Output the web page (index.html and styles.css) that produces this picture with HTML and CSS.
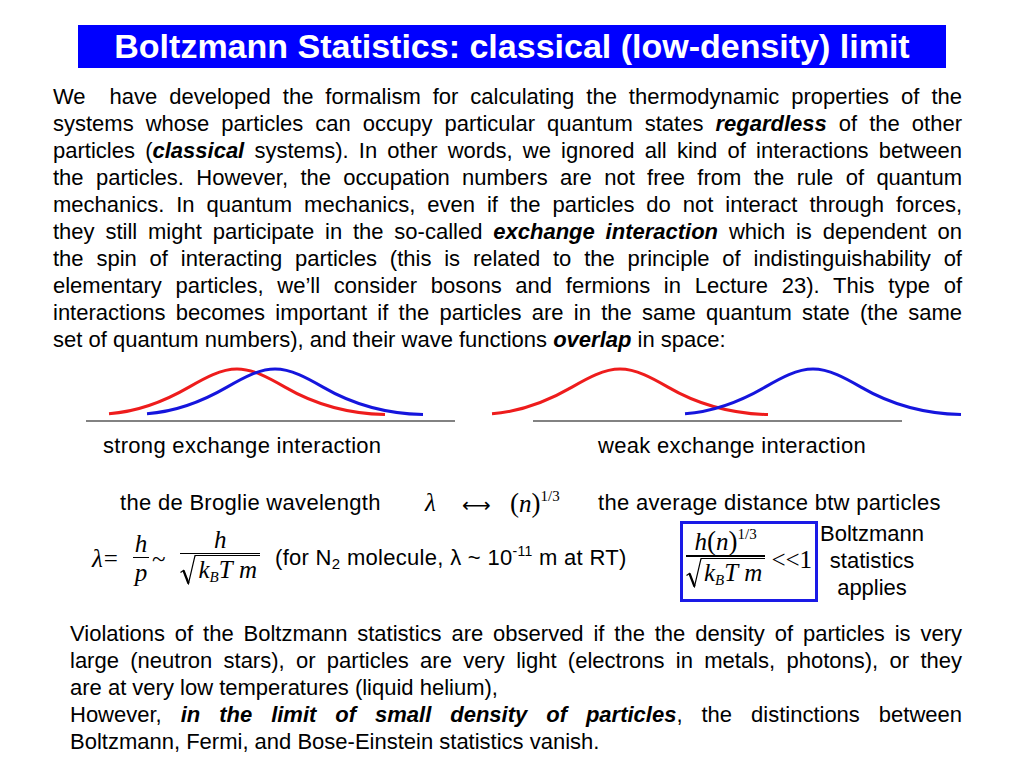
FILE: index.html
```html
<!DOCTYPE html>
<html lang="en">
<head>
<meta charset="utf-8">
<title>Boltzmann Statistics</title>
<link rel="stylesheet" href="styles.css">
</head>
<body>
<div class="slide">
  <h1 class="title">Boltzmann Statistics: classical (low-density) limit</h1>

  <p class="text intro">
    <span class="line">We&nbsp; have developed the formalism for calculating the thermodynamic properties of the</span>
    <span class="line">systems whose particles can occupy particular quantum states <b><i>regardless</i></b> of the other</span>
    <span class="line">particles (<b><i>classical</i></b> systems). In other words, we ignored all kind of interactions between</span>
    <span class="line">the particles. However, the occupation numbers are not free from the rule of quantum</span>
    <span class="line">mechanics. In quantum mechanics, even if the particles do not interact through forces,</span>
    <span class="line">they still might participate in the so-called <b><i>exchange interaction</i></b> which is dependent on</span>
    <span class="line">the spin of interacting particles (this is related to the principle of indistinguishability of</span>
    <span class="line">elementary particles, we’ll consider bosons and fermions in Lecture 23). This type of</span>
    <span class="line">interactions becomes important if the particles are in the same quantum state (the same</span>
    <span class="line last">set of quantum numbers), and their wave functions <b><i>overlap</i></b> in space:</span>
  </p>

  <svg class="curves" viewBox="0 360 1024 70" width="1024" height="70" aria-hidden="true">
    <defs>
      <path id="gauss" d="M-128 -1.3 C-101.3 -3.25 -74.7 -12.4 -48 -27.9 C-32 -37.2 -16 -46 0 -46 C16 -46 32 -37.2 48 -27.9 C81.3 -8.5 114.7 -1.27 148 -0.4"/>
    </defs>
    <path class="axis" d="M86 421 H455 M533 421 H902"/>
    <use href="#gauss" class="red" transform="translate(237 415)"/>
    <use href="#gauss" class="blue" transform="translate(275 415)"/>
    <use href="#gauss" class="red" transform="translate(620 415)"/>
    <use href="#gauss" class="blue" transform="translate(813 415)"/>
  </svg>

  <div class="captions">
    <span>strong exchange interaction</span>
    <span>weak exchange interaction</span>
  </div>

  <div class="broglie">
    <span>the de Broglie wavelength</span>
    <span class="m">λ</span>
    <span class="arrow">⟷</span>
    <span class="m"><span class="up paren">(</span>n<span class="up paren">)</span><sup class="exp">1/3</sup></span>
    <span>the average distance btw particles</span>
  </div>

  <div class="formulas">
    <div class="m eq">
      <span>λ</span><span class="up op">=</span><span class="frac small"><span class="num">h</span><span class="bar"></span><span class="den">p</span></span><span class="up op">~</span><span class="frac"><span class="num">h</span><span class="bar"></span><span class="den"><span class="sqrt"><svg class="rad" viewBox="0 0 16 30" width="16" height="30"><path class="rad-thin" d="M0.5 17.5 L3.5 15.5 L8.5 28.5 L15 0.7 H16"/><path class="rad-thick" d="M3.5 15.5 L8.5 28.5"/></svg><span class="radicand">k<sub class="sb">B</sub>T&nbsp;m</span></span></span></span>
    </div>
    <div class="note">(for N<sub class="nsub">2</sub> molecule, λ ~ 10<sup class="nsup">-11</sup> m at RT)</div>
    <div class="box m">
      <span class="frac"><span class="num">h<span class="up paren">(</span>n<span class="up paren">)</span><sup class="exp">1/3</sup></span><span class="bar"></span><span class="den"><span class="sqrt"><svg class="rad" viewBox="0 0 16 30" width="16" height="30"><path class="rad-thin" d="M0.5 17.5 L3.5 15.5 L8.5 28.5 L15 0.7 H16"/><path class="rad-thick" d="M3.5 15.5 L8.5 28.5"/></svg><span class="radicand">k<sub class="sb">B</sub>T&nbsp;m</span></span></span></span><span class="up ll">&lt;&lt;1</span>
    </div>
    <div class="applies">Boltzmann<br>statistics<br>applies</div>
  </div>

  <p class="text outro">
    <span class="line">Violations of the Boltzmann statistics are observed if the the density of particles is very</span>
    <span class="line">large (neutron stars), or particles are very light (electrons in metals, photons), or they</span>
    <span class="line last">are at very low temperatures (liquid helium),</span>
    <span class="line">However, <b><i>in the limit of small density of particles</i></b>, the distinctions between</span>
    <span class="line last">Boltzmann, Fermi, and Bose-Einstein statistics vanish.</span>
  </p>
</div>
</body>
</html>
```

FILE: styles.css
```css
html, body {
  margin: 0;
  padding: 0;
  background: #ffffff;
}

body {
  font-family: "Liberation Sans", Arial, sans-serif;
  color: #000000;
}

.slide {
  width: 1024px;
  height: 768px;
  overflow: hidden;
}

.title {
  margin: 25px 0 0 78px;
  width: 868px;
  height: 43px;
  background: #0000ff;
  color: #ffffff;
  font-size: 34px;
  font-weight: bold;
  line-height: 43px;
  text-align: center;
  white-space: nowrap;
}

.text {
  font-size: 22px;
  line-height: 27px;
  margin: 0;
}

.intro {
  margin: 15px 0 0 53px;
  width: 909px;
}

.outro {
  margin: 13.5px 0 0 70px;
  width: 892px;
  line-height: 27.2px;
}

.line {
  display: block;
  text-align: justify;
  text-align-last: justify;
  white-space: nowrap;
}

.line.last {
  text-align-last: left;
}

/* diagrams */
.curves {
  display: block;
  margin-top: 7px;
}

.axis {
  stroke: #5a5a5a;
  stroke-width: 1.5;
  fill: none;
}

.curves use {
  fill: none;
  stroke-width: 3;
}

.red {
  stroke: #ee1c1c;
}

.blue {
  stroke: #1515dd;
}

.captions {
  display: grid;
  grid-template-columns: 495px auto;
  padding-left: 103px;
  margin-top: 2px;
  font-size: 22px;
  line-height: 27px;
  letter-spacing: 0.3px;
}

/* math */
.m {
  font-family: "Liberation Serif", "Times New Roman", serif;
  font-style: italic;
  font-size: 25px;
}

.up {
  font-style: normal;
}

.paren {
  font-size: 27px;
}

.exp {
  font-size: 15px;
  font-style: normal;
  vertical-align: 11px;
  line-height: 0;
}

.broglie {
  display: grid;
  grid-template-columns: 305px 37px 48px 88px auto;
  align-items: center;
  padding-left: 120px;
  height: 30px;
  margin-top: 27px;
  font-size: 22px;
  letter-spacing: 0.3px;
}

.broglie .m {
  line-height: 30px;
  letter-spacing: 0;
}

.arrow {
  font-family: "DejaVu Sans", sans-serif;
  font-size: 20px;
  line-height: 30px;
  margin-top: 4px;
  letter-spacing: 0;
}

.formulas {
  display: grid;
  grid-template-columns: 183px 405px 138px 108px;
  align-items: center;
  padding-left: 92px;
  height: 90px;
}

.eq {
  display: flex;
  align-items: center;
  margin-top: -5px;
}

.op {
  margin: 0 15px 0 1px;
}

.frac {
  display: inline-flex;
  flex-direction: column;
  align-items: stretch;
  text-align: center;
  margin: 0 1px 0 0;
}

.frac.small {
  width: 16px;
  margin-right: 2px;
}

.num {
  display: block;
  line-height: 27px;
  padding: 0 2px;
}

.frac.small .num {
  padding: 0;
}

.bar {
  display: block;
  height: 1.5px;
  background: #000000;
}

.den {
  display: block;
  line-height: 28px;
  padding: 1px 0 0 0;
  text-align: center;
}

.sqrt {
  display: inline-flex;
  align-items: flex-start;
}

.rad {
  display: block;
  flex: none;
}

.rad-thin {
  fill: none;
  stroke: #000;
  stroke-width: 1.2;
}

.rad-thick {
  fill: none;
  stroke: #000;
  stroke-width: 2.2;
}

.radicand {
  border-top: 1.3px solid #000;
  line-height: 28px;
  padding: 0 3px 0 2px;
  white-space: nowrap;
}

.sb {
  font-size: 15px;
  vertical-align: -4px;
  line-height: 0;
}

.note {
  font-size: 22px;
  line-height: 27px;
  margin-top: -8px;
  white-space: nowrap;
  letter-spacing: 0.3px;
}

.nsub {
  font-size: 15px;
  vertical-align: -4px;
  line-height: 0;
}

.nsup {
  font-size: 14px;
  vertical-align: 9px;
  line-height: 0;
}

.box {
  box-sizing: border-box;
  width: 138px;
  height: 81px;
  border: 3px solid #1a1ae6;
  display: flex;
  align-items: center;
  justify-content: center;
}

.box .frac {
  margin: 0 6px 0 0;
}

.ll {
  font-size: 25px;
  margin-top: -2px;
}

.applies {
  font-size: 22px;
  line-height: 27px;
  text-align: center;
  margin-top: -2px;
}
```
